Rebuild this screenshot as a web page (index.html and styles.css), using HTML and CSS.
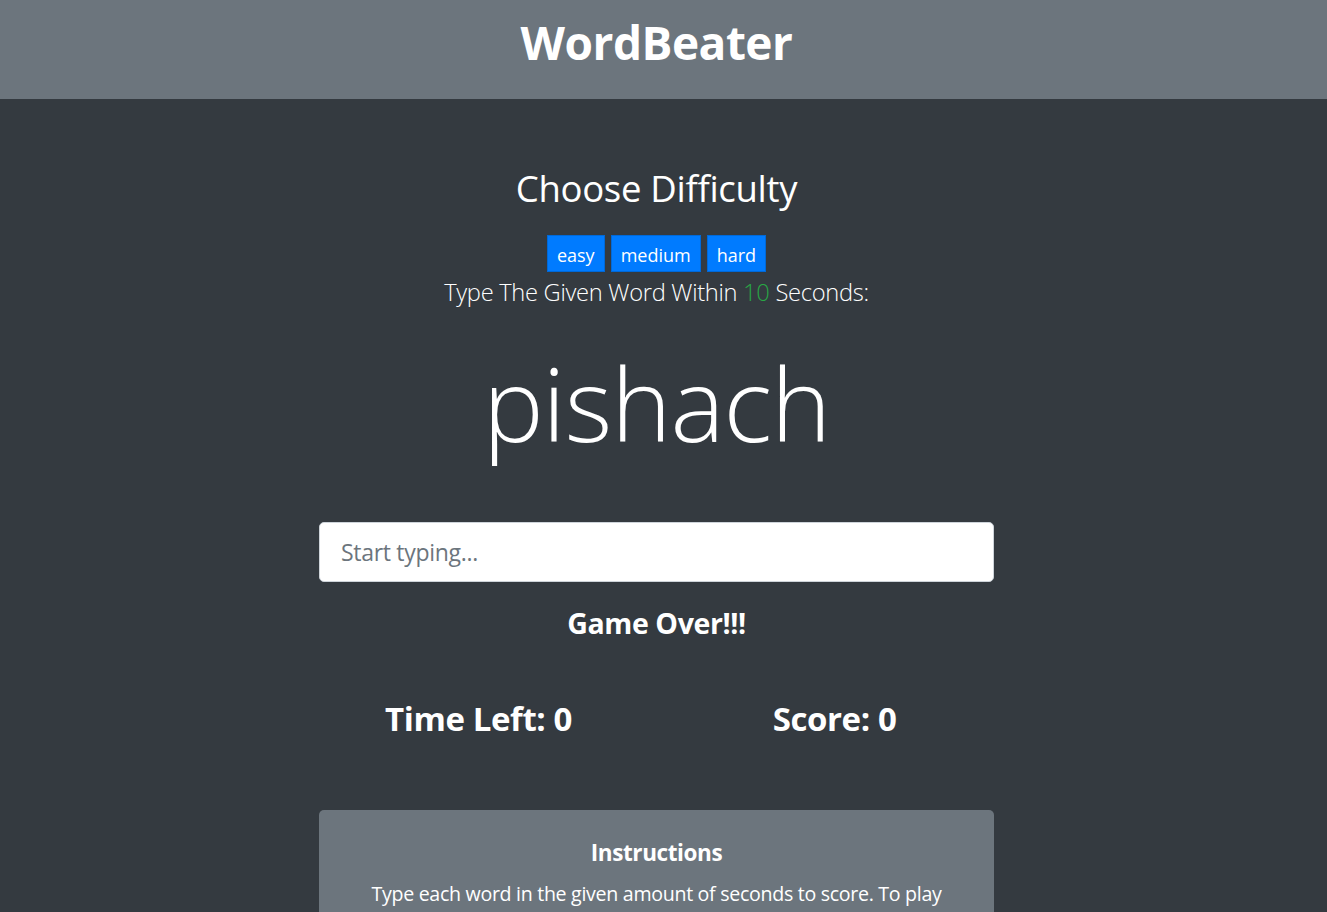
FILE: index.html
```html
<!DOCTYPE html>
<html lang="en">
<head>
<meta charset="utf-8">
<title>WordBeater</title>
<link rel="stylesheet" href="styles.css">
</head>
<body>
<header class="topbar">
  <h1 class="brand">WordBeater</h1>
</header>
<main class="main">
  <div class="column">
    <h2 class="choose">Choose Difficulty</h2>
    <div class="levels">
      <button class="level">easy</button>
      <button class="level">medium</button>
      <button class="level">hard</button>
    </div>
    <p class="lead">Type The Given Word Within <span class="secs">10</span> Seconds:</p>
    <h2 class="word">pishach</h2>
    <input class="typing" type="text" placeholder="Start typing...">
    <h4 class="message">Game Over!!!</h4>
    <div class="stats">
      <h3 class="stat">Time Left: 0</h3>
      <h3 class="stat">Score: 0</h3>
    </div>
    <div class="card">
      <h5 class="card-title">Instructions</h5>
      <p class="card-text">Type each word in the given amount of seconds to score. To play again, just type the current word. Your score will reset.</p>
    </div>
  </div>
</main>
</body>
</html>
```
FILE: styles.css
```css
html, body {
  margin: 0;
  padding: 0;
}
body {
  background: #343a40;
  color: #fff;
  font-family: "Open Sans", "Noto Sans", sans-serif;
  min-height: 912px;
}
.topbar {
  background: #6c757d;
  height: 99px;
  padding-right: 14px;
  display: flex;
  align-items: center;
  justify-content: center;
}
.brand {
  margin: 0;
  font-size: 46px;
  font-weight: 700;
  line-height: 1;
  letter-spacing: -0.5px;
  transform: translateY(-8px);
}
.main {
  padding-right: 14px;
  display: flex;
  justify-content: center;
}
.column {
  width: 675px;
  display: flex;
  flex-direction: column;
  align-items: center;
  padding-top: 64px;
}
.choose {
  margin: 0;
  font-size: 36.5px;
  font-weight: 400;
  line-height: 50px;
  letter-spacing: -0.3px;
}
.levels {
  display: flex;
  gap: 6px;
  margin-top: 22px;
}
.level {
  background: #007bff;
  border: 1px solid #0069d9;
  color: #fff;
  font-family: inherit;
  font-size: 18px;
  height: 37px;
  padding: 2px 9px 0;
  border-radius: 0;
  line-height: 1;
}
.lead {
  margin: 4px 0 0;
  font-size: 23.7px;
  font-weight: 300;
  line-height: 32px;
  letter-spacing: -0.3px;
}
.secs {
  color: #28a745;
}
.word {
  margin: 20px 0 0;
  font-size: 102px;
  font-weight: 300;
  line-height: 150px;
  letter-spacing: -1px;
}
.typing {
  box-sizing: border-box;
  width: 675px;
  height: 60px;
  margin-top: 44px;
  border: 1px solid #ced4da;
  border-radius: 5px;
  padding: 0 21px;
  font-family: inherit;
  font-size: 23px;
  color: #495057;
  background: #fff;
  outline: none;
}
.typing::placeholder {
  color: #6c757d;
  letter-spacing: -0.3px;
}
.message {
  margin: 18px 0 0;
  font-size: 28.5px;
  font-weight: 700;
  line-height: 46px;
  letter-spacing: -0.4px;
}
.stats {
  width: 712px;
  display: grid;
  grid-template-columns: 1fr 1fr;
  margin-top: 48px;
}
.stat {
  margin: 0;
  text-align: center;
  font-size: 33px;
  font-weight: 700;
  line-height: 50px;
  letter-spacing: -0.4px;
}
.card {
  box-sizing: border-box;
  width: 675px;
  margin-top: 66px;
  background: #6c757d;
  border-radius: 5px;
  padding: 28px 36px 20px;
  text-align: center;
}
.card-title {
  margin: 0;
  font-size: 22.5px;
  font-weight: 700;
  line-height: 30px;
  letter-spacing: -0.4px;
}
.card-text {
  margin: 12px 0 0;
  font-size: 19.6px;
  line-height: 28px;
  letter-spacing: -0.3px;
}
```
